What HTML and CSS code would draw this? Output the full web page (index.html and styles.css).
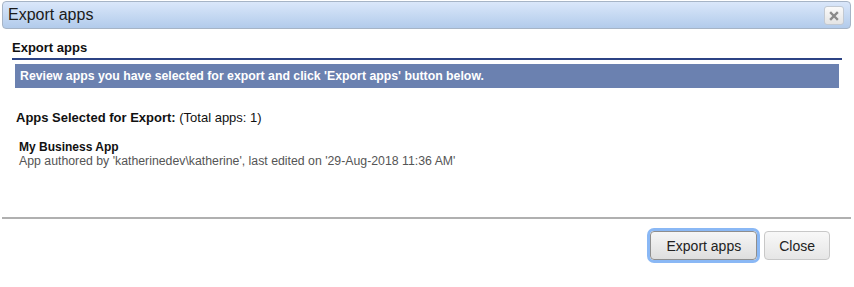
FILE: index.html
```html
<!DOCTYPE html>
<html lang="en">

<head>
    <meta charset="UTF-8">
    <meta name="viewport" content="width=device-width, initial-scale=1.0">
    <title>Export apps</title>
    <link rel="stylesheet" href="styles.css">
</head>

<body>
    <div class="dialog">
        <div class="titlebar">
            <span class="title">Export apps</span>
            <button class="close-x" title="Close">
                <svg width="10" height="10" viewBox="0 0 10 10">
                    <path d="M2 2 L8 8 M8 2 L2 8" stroke="#8a8a8a" stroke-width="2.4" stroke-linecap="square" />
                </svg>
            </button>
        </div>
        <div class="content">
            <h4 class="section-title">Export apps</h4>
            <div class="info-bar">Review apps you have selected for export and click 'Export apps' button below.</div>
            <p class="summary"><b>Apps Selected for Export:</b> (Total apps: 1)</p>
            <div class="app-item">
                <div class="app-name">My Business App</div>
                <div class="app-meta">App authored by 'katherinedev\katherine', last edited on '29-Aug-2018 11:36 AM'</div>
            </div>
        </div>
        <div class="footer">
            <button class="btn btn-focus">Export apps</button>
            <button class="btn">Close</button>
        </div>
    </div>
</body>

</html>
```

FILE: styles.css
```css
/* dialog styles */
body {
    margin: 0;
    padding: 0;
    font-family: 'Liberation Sans', Arial, sans-serif;
    background-color: #ffffff;
    color: #111;
}

.dialog {
    width: 854px;
    height: 287px;
}

.titlebar {
    margin: 1px 3px 0 2px;
    height: 26px;
    display: flex;
    align-items: center;
    justify-content: space-between;
    padding: 0 6px 0 5px;
    border: 1px solid #a6b4c6;
    border-radius: 4px;
    background: linear-gradient(#dae7fa, #b2cbeb);
}

.title {
    font-size: 16px;
    color: #1a1a1a;
}

.close-x {
    width: 20px;
    height: 19px;
    padding: 0;
    margin-top: 1px;
    display: flex;
    align-items: center;
    justify-content: center;
    border: 1px solid #c2c9d2;
    border-radius: 3px;
    background: linear-gradient(#fafafa, #e4e4e4);
}

.content {
    padding: 11px 12px 0 12px;
}

.section-title {
    margin: 0;
    width: 830px;
    font-size: 13px;
    line-height: 16px;
    padding-bottom: 2px;
    border-bottom: 2px solid #2c4384;
}

.info-bar {
    margin: 4px 3px 0 3px;
    width: 824px;
    height: 24px;
    line-height: 24px;
    padding-left: 5px;
    box-sizing: border-box;
    background-color: #6b81b0;
    color: #fff;
    font-size: 12.3px;
    font-weight: bold;
}

.summary {
    margin: 22px 0 0 4px;
    font-size: 13px;
    line-height: 16px;
}

.app-item {
    margin: 14px 0 0 7px;
    font-size: 12px;
    line-height: 14px;
}

.app-name {
    font-weight: bold;
}

.app-meta {
    color: #555;
    font-size: 12.3px;
}

.footer {
    margin: 49px 3px 0 2px;
    border-top: 2px solid #b0b0b0;
    display: flex;
    justify-content: flex-end;
    gap: 7px;
    padding: 12px 21px 0 0;
}

.btn {
    height: 29px;
    padding: 0 14px;
    font-family: 'Liberation Sans', Arial, sans-serif;
    font-size: 14px;
    color: #222;
    border: 1px solid #c8c8c8;
    border-radius: 4px;
    background: linear-gradient(#f8f8f8, #e6e6e6);
}

.btn-focus {
    padding: 0 15px;
    border: 1px solid #8e8e8e;
    box-shadow: 0 0 0 3px #8ab8f5;
    background: linear-gradient(#f6f6f6, #dedede);
}
```
